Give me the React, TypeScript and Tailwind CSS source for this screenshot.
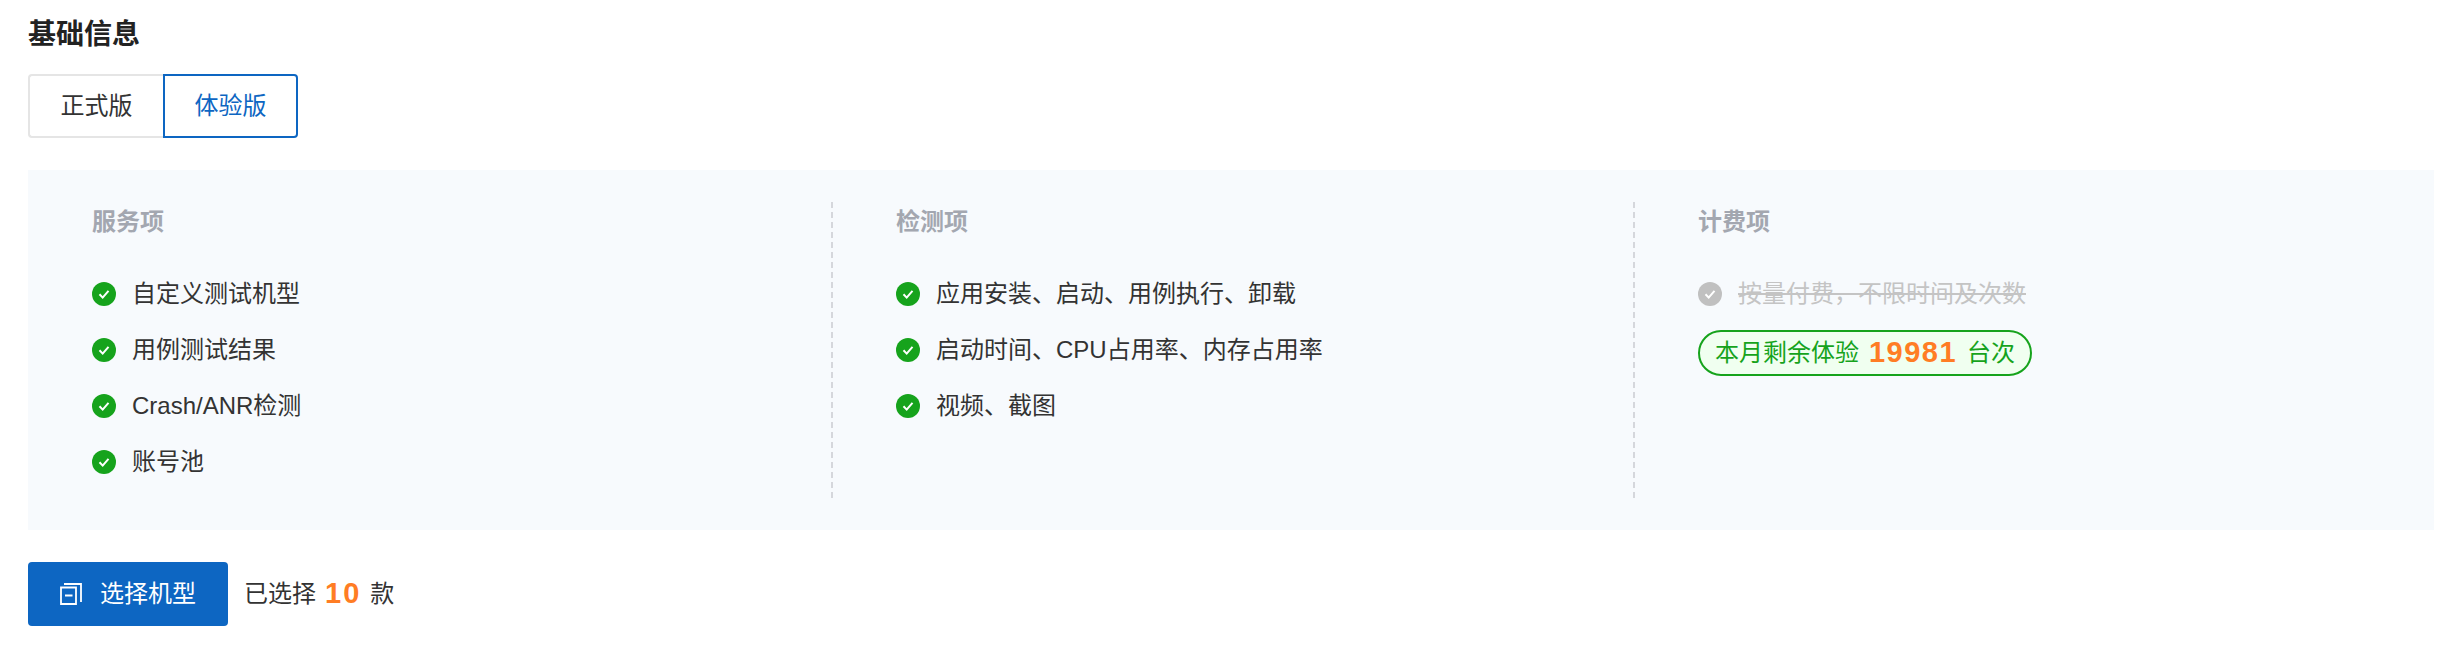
const fontStack = "font-['Liberation_Sans','Noto_Sans_CJK_SC',sans-serif]";

function CheckIcon({ muted }: { muted?: boolean }) {
  return (
    <svg width="24" height="24" viewBox="0 0 24 24" className="shrink-0">
      <circle cx="12" cy="12" r="12" fill={muted ? '#c0c0c0' : '#16a31c'} />
      <path d="M7.5 12.2l3.2 3.4 5.8-6.8" fill="none" stroke="#fff" strokeWidth="2" />
    </svg>
  );
}

function Item({ text }: { text: string }) {
  return (
    <li className="flex h-[56px] items-center gap-[16px]">
      <CheckIcon />
      <span>{text}</span>
    </li>
  );
}

function Divider() {
  return <div className="w-[2px] shrink-0 self-stretch bg-[repeating-linear-gradient(to_bottom,#d5d7dc_0,#d5d7dc_6px,transparent_6px,transparent_10px)]" />;
}

function Heading({ text }: { text: string }) {
  return <h3 className="mb-[24px] h-[40px] text-[24px] leading-[40px] font-semibold text-[#a3a7b0]">{text}</h3>;
}

export default function App() {
  return (
    <div className={`${fontStack} h-[652px] w-[2450px] bg-white pt-[15px] pr-[16px] pl-[28px] text-[24px] text-[#333]`}>
      <h2 className="h-[40px] text-[28px] leading-[40px] font-bold text-[#222]">基础信息</h2>
      <div className="mt-[19px] flex">
        <button className="h-[64px] w-[135px] rounded-l-[4px] border-2 border-r-0 border-[#e5e5e5] bg-white text-[24px] text-[#333]">正式版</button>
        <button className="h-[64px] w-[135px] rounded-r-[4px] border-2 border-[#0d66c2] bg-white text-[24px] text-[#0d66c2]">体验版</button>
      </div>
      <div className="mt-[32px] flex h-[360px] bg-[#f7fafd] py-[32px]">
        <section className="w-[803px] shrink-0 pl-[64px]">
          <Heading text="服务项" />
          <ul>
            <Item text="自定义测试机型" />
            <Item text="用例测试结果" />
            <Item text="Crash/ANR检测" />
            <Item text="账号池" />
          </ul>
        </section>
        <Divider />
        <section className="w-[800px] shrink-0 pl-[63px]">
          <Heading text="检测项" />
          <ul>
            <Item text="应用安装、启动、用例执行、卸载" />
            <Item text="启动时间、CPU占用率、内存占用率" />
            <Item text="视频、截图" />
          </ul>
        </section>
        <Divider />
        <section className="pl-[63px]">
          <Heading text="计费项" />
          <div className="flex h-[56px] items-center gap-[16px] text-[#c4c4c4]">
            <CheckIcon muted />
            <span className="line-through">按量付费，不限时间及次数</span>
          </div>
          <div className="mt-[8px] flex h-[46px] w-[334px] items-center justify-center rounded-full border-2 border-[#16a31c] bg-[#f0fff0] text-[#16a31c]">
            本月剩余体验
            <span className="mx-[10px] text-[29px] font-bold tracking-[1.5px] text-[#ff7d24]">19981</span>
            台次
          </div>
        </section>
      </div>
      <div className="mt-[32px] flex items-center gap-[16px]">
        <button className="flex h-[64px] w-[200px] items-center justify-center gap-[18px] rounded-[4px] bg-[#0d66c2] text-[24px] text-white">
          <svg width="22" height="22" viewBox="0 0 22 22" fill="none" stroke="#fff" strokeWidth="1.8">
            <path d="M1 4.5h15v16.5H1zM4 1h17v18M5 12.5h7.5" />
          </svg>
          选择机型
        </button>
        <div className="flex items-center">
          已选择
          <span className="mr-[9px] ml-[9px] text-[29px] font-bold tracking-[2px] text-[#ff7d24]">10</span>
          款
        </div>
      </div>
    </div>
  );
}
